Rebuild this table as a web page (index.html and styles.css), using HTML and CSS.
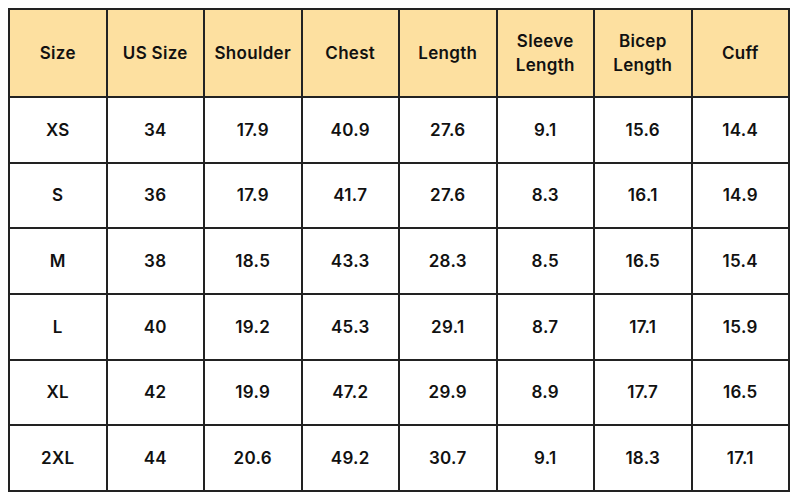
FILE: index.html
```html
<!DOCTYPE html>
<html>
<head>
<meta charset="utf-8">
<link rel="stylesheet" href="styles.css">
</head>
<body>
<div class="chart">
  <div class="cell head">Size</div>
  <div class="cell head">US Size</div>
  <div class="cell head">Shoulder</div>
  <div class="cell head">Chest</div>
  <div class="cell head">Length</div>
  <div class="cell head">Sleeve<br>Length</div>
  <div class="cell head">Bicep<br>Length</div>
  <div class="cell head">Cuff</div>

  <div class="cell">XS</div><div class="cell">34</div><div class="cell">17.9</div><div class="cell">40.9</div><div class="cell">27.6</div><div class="cell">9.1</div><div class="cell">15.6</div><div class="cell">14.4</div>
  <div class="cell">S</div><div class="cell">36</div><div class="cell">17.9</div><div class="cell">41.7</div><div class="cell">27.6</div><div class="cell">8.3</div><div class="cell">16.1</div><div class="cell">14.9</div>
  <div class="cell">M</div><div class="cell">38</div><div class="cell">18.5</div><div class="cell">43.3</div><div class="cell">28.3</div><div class="cell">8.5</div><div class="cell">16.5</div><div class="cell">15.4</div>
  <div class="cell">L</div><div class="cell">40</div><div class="cell">19.2</div><div class="cell">45.3</div><div class="cell">29.1</div><div class="cell">8.7</div><div class="cell">17.1</div><div class="cell">15.9</div>
  <div class="cell">XL</div><div class="cell">42</div><div class="cell">19.9</div><div class="cell">47.2</div><div class="cell">29.9</div><div class="cell">8.9</div><div class="cell">17.7</div><div class="cell">16.5</div>
  <div class="cell">2XL</div><div class="cell">44</div><div class="cell">20.6</div><div class="cell">49.2</div><div class="cell">30.7</div><div class="cell">9.1</div><div class="cell">18.3</div><div class="cell">17.1</div>
</div>
</body>
</html>
```
FILE: styles.css
```css
html, body {
  margin: 0;
  padding: 0;
  background: #ffffff;
}
body {
  padding: 8px;
}
.chart {
  width: 782px;
  height: 484px;
  box-sizing: border-box;
  display: grid;
  grid-template-columns: repeat(8, 1fr);
  grid-template-rows: 86px repeat(6, 1fr);
  gap: 2px;
  padding: 2px;
  background: #222222;
  font-family: "Inter", "Liberation Sans", sans-serif;
  font-weight: 600;
  font-size: 17px;
  letter-spacing: 0.3px;
  color: #111111;
}
.cell {
  background: #ffffff;
  display: flex;
  align-items: center;
  justify-content: center;
  text-align: center;
  line-height: 24px;
}
.head {
  background: #fde0a0;
}
```
